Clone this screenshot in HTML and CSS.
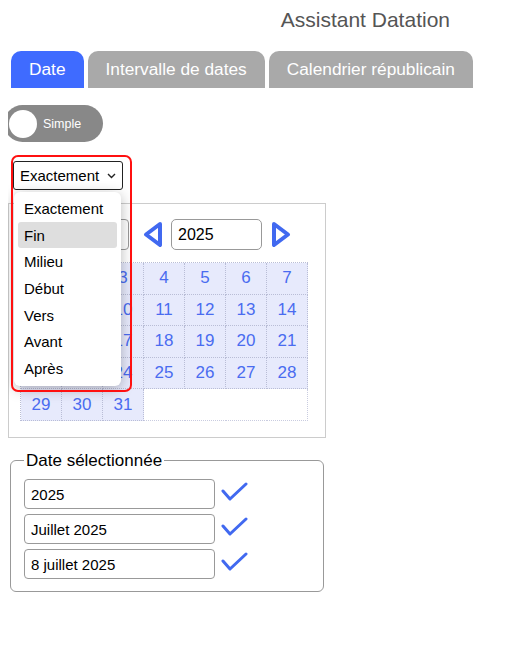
FILE: index.html
```html
<!DOCTYPE html>
<html lang="fr">
<head>
<meta charset="utf-8">
<title>Assistant Datation</title>
<link rel="stylesheet" href="styles.css">
</head>
<body>
<h1 class="title">Assistant Datation</h1>
<div class="tabs">
  <div class="tab active">Date</div>
  <div class="tab">Intervalle de dates</div>
  <div class="tab">Calendrier républicain</div>
</div>
<div class="toggle"><span class="knob"></span><span class="toggle-label">Simple</span></div>

<div class="precision">
  <div class="select">
    <span>Exactement</span>
    <svg class="chev" width="9" height="6" viewBox="0 0 9 6"><polyline points="1,1 4.5,4.5 8,1" fill="none" stroke="#222" stroke-width="1.4"/></svg>
  </div>
  <div class="focus-ring"></div>
  <ul class="popup">
    <li>Exactement</li>
    <li class="hover">Fin</li>
    <li>Milieu</li>
    <li>Début</li>
    <li>Vers</li>
    <li>Avant</li>
    <li>Après</li>
  </ul>
</div>

<div class="calendar">
  <div class="cal-head">
    <div class="month-select"></div>
    <svg class="arrow left" width="20" height="27" viewBox="0 0 20 27"><polygon points="17,3 3,13.5 17,24" fill="none" stroke="#4169f0" stroke-width="4" stroke-linejoin="round"/></svg>
    <input class="year" type="text" value="2025">
    <svg class="arrow right" width="20" height="27" viewBox="0 0 20 27"><polygon points="3,3 17,13.5 3,24" fill="none" stroke="#4169f0" stroke-width="4" stroke-linejoin="round"/></svg>
  </div>
  <div class="grid">
    <div class="day">1</div><div class="day">2</div><div class="day">3</div><div class="day">4</div><div class="day">5</div><div class="day">6</div><div class="day">7</div>
    <div class="day">8</div><div class="day">9</div><div class="day">10</div><div class="day">11</div><div class="day">12</div><div class="day">13</div><div class="day">14</div>
    <div class="day">15</div><div class="day">16</div><div class="day">17</div><div class="day">18</div><div class="day">19</div><div class="day">20</div><div class="day">21</div>
    <div class="day">22</div><div class="day">23</div><div class="day">24</div><div class="day">25</div><div class="day">26</div><div class="day">27</div><div class="day">28</div>
    <div class="day">29</div><div class="day">30</div><div class="day">31</div><div class="empty"></div><div class="empty"></div><div class="empty"></div><div class="empty last"></div>
  </div>
</div>

<fieldset class="selected">
  <legend>Date sélectionnée</legend>
  <div class="row"><input type="text" value="2025"><svg class="check" width="27" height="20" viewBox="0 0 27 20"><polyline points="2,9 9,17 25,2" fill="none" stroke="#4169f0" stroke-width="3" stroke-linecap="round" stroke-linejoin="round"/></svg></div>
  <div class="row"><input type="text" value="Juillet 2025"><svg class="check" width="27" height="20" viewBox="0 0 27 20"><polyline points="2,9 9,17 25,2" fill="none" stroke="#4169f0" stroke-width="3" stroke-linecap="round" stroke-linejoin="round"/></svg></div>
  <div class="row"><input type="text" value="8 juillet 2025"><svg class="check" width="27" height="20" viewBox="0 0 27 20"><polyline points="2,9 9,17 25,2" fill="none" stroke="#4169f0" stroke-width="3" stroke-linecap="round" stroke-linejoin="round"/></svg></div>
</fieldset>
</body>
</html>
```
FILE: styles.css
```css
* { box-sizing: border-box; }
body {
  margin: 8px;
  font-family: "Liberation Sans", Arial, sans-serif;
  color: #000;
  background: #fff;
}
.title {
  margin: 0;
  font-size: 21px;
  line-height: 24px;
  font-weight: normal;
  color: #555;
  text-align: right;
  padding-right: 50px;
}
.tabs {
  display: flex;
  gap: 4px;
  margin: 19px 0 0 3px;
}
.tab {
  height: 37px;
  padding: 0 18px;
  display: flex;
  align-items: center;
  font-size: 17.3px;
  color: #fff;
  background: #a9a9a9;
  border-radius: 10px 10px 0 0;
}
.tab.active { background: #3f6bff; }
.toggle {
  margin: 17px 0 0 -4px;
  width: 99px;
  height: 37px;
  border-radius: 19px;
  background: #888;
  display: flex;
  align-items: center;
  padding-left: 5px;
  gap: 6px;
}
.knob {
  width: 28px;
  height: 28px;
  border-radius: 50%;
  background: #fff;
}
.toggle-label {
  color: #fff;
  font-size: 12.5px;
}
.precision {
  position: relative;
  margin: 19px 0 0 5px;
  width: 110px;
}
.select {
  width: 110px;
  height: 29px;
  border: 1px solid #222;
  border-radius: 3px;
  display: flex;
  align-items: center;
  justify-content: space-between;
  padding: 0 6px 0 6px;
  font-size: 15px;
  background: #fff;
}
.chev { margin-top: 1px; }
.focus-ring {
  position: absolute;
  left: -2px;
  top: -6px;
  width: 121px;
  height: 237px;
  border: 2px solid #ff1010;
  border-radius: 7px;
  z-index: 3;
  pointer-events: none;
}
.popup {
  position: absolute;
  left: 1px;
  top: 31px;
  width: 107px;
  margin: 0;
  padding: 3px 4px 4px;
  list-style: none;
  background: #fff;
  border-radius: 6px;
  box-shadow: 0 3px 14px rgba(0, 0, 0, 0.28);
  z-index: 2;
}
.popup li {
  height: 26.7px;
  display: flex;
  align-items: center;
  padding-left: 6px;
  font-size: 15px;
  border-radius: 3px;
}
.popup li.hover { background: #dedede; }
.calendar {
  margin-top: 13px;
  width: 318px;
  height: 235px;
  border: 1px solid #ccc;
  padding: 15px 0 0 11px;
}
.cal-head {
  display: flex;
  align-items: center;
  height: 31px;
}
.month-select {
  width: 109px;
  height: 31px;
  border: 1px solid #999;
  border-radius: 4px;
}
.arrow.left { margin-left: 14px; }
.year {
  margin-left: 8px;
  width: 91px;
  height: 31px;
  border: 1px solid #999;
  border-radius: 5px;
  padding: 0 6px;
  font-family: "Liberation Sans", Arial, sans-serif;
  font-size: 16px;
  color: #000;
}
.arrow.right { margin-left: 9px; }
.grid {
  margin-top: 12px;
  display: grid;
  grid-template-columns: repeat(7, 41px);
  grid-auto-rows: 31.6px;
  width: 288px;
  border-top: 1px dotted #b9bdd6;
  border-left: 1px dotted #b9bdd6;
}
.day {
  background: #e7eafc;
  border-right: 1px dotted #b9bdd6;
  border-bottom: 1px dotted #b9bdd6;
  display: flex;
  align-items: center;
  justify-content: center;
  font-size: 17px;
  color: #4a6cf0;
}
.empty { border-bottom: 1px dotted #c9cce0; }
.empty.last { border-right: 1px dotted #c9cce0; }
.selected {
  margin: 13px 0 0 2px;
  width: 314px;
  border: 1px solid #999;
  border-radius: 6px;
  padding: 9px 13px 12px 13px;
  display: flex;
  flex-direction: column;
  gap: 5px;
}
.selected legend {
  padding: 0 2px;
  font-size: 17px;
  line-height: 19px;
}
.row {
  display: flex;
  align-items: center;
  gap: 6px;
}
.row input {
  width: 191px;
  height: 30px;
  border: 1px solid #999;
  border-radius: 4px;
  padding: 0 6px;
  font-family: "Liberation Sans", Arial, sans-serif;
  font-size: 15px;
  color: #000;
}
.check { margin-top: -4px; }
```
